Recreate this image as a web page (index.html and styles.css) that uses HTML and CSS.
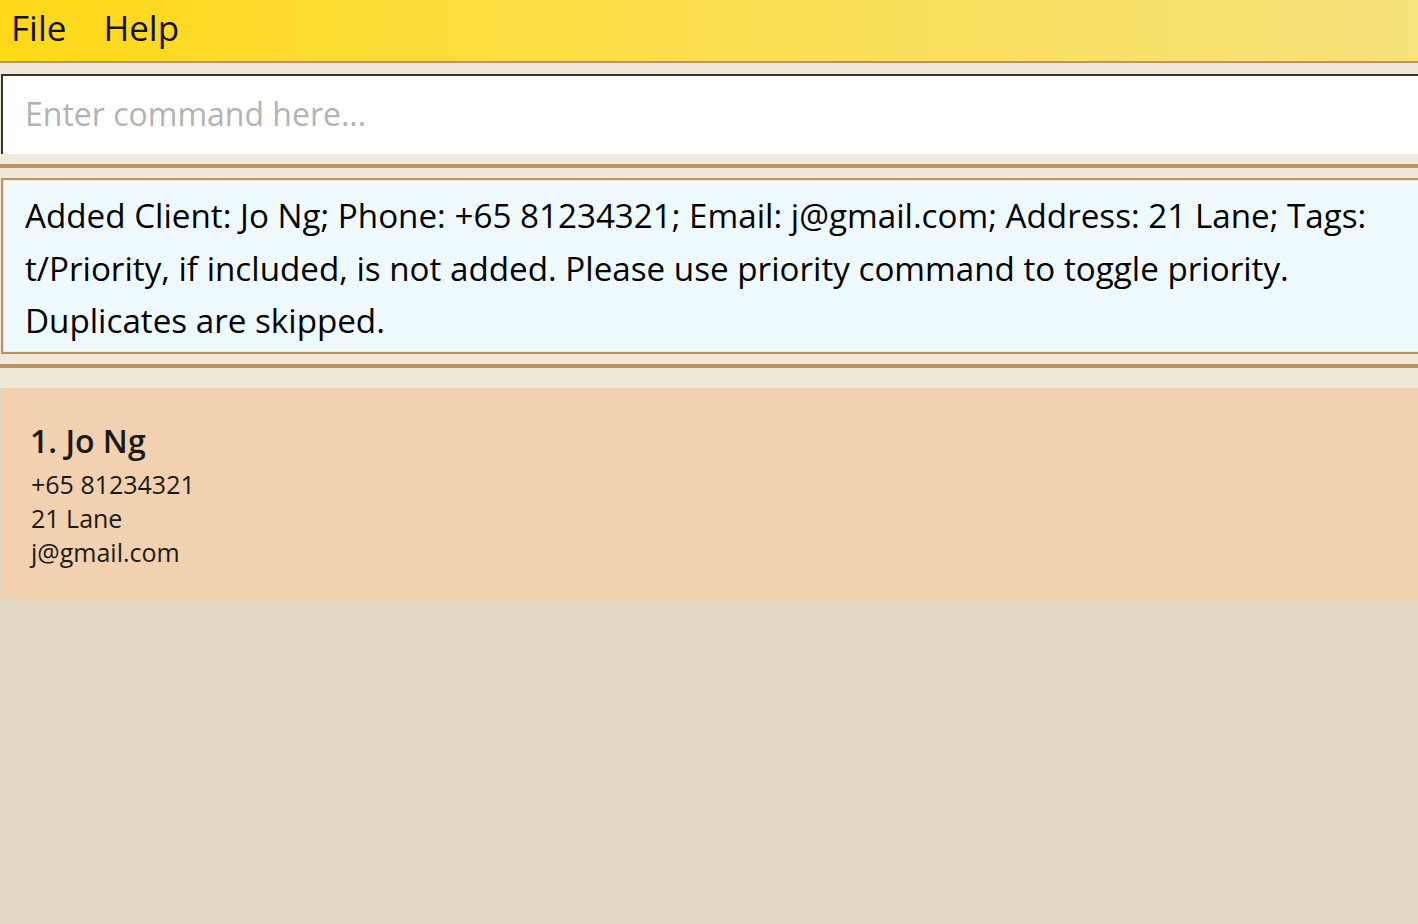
FILE: index.html
```html
<!DOCTYPE html>
<html lang="en">
<head>
<meta charset="utf-8">
<title>Address Book</title>
<link rel="stylesheet" href="styles.css">
</head>
<body>
<div class="app">
  <nav class="menubar">
    <span class="menu-item">File</span>
    <span class="menu-item">Help</span>
  </nav>
  <div class="command-wrap">
    <input class="command-box" type="text" placeholder="Enter command here...">
  </div>
  <div class="divider"></div>
  <div class="result-wrap">
    <div class="result-box">Added Client: Jo Ng; Phone: +65 81234321; Email: j@gmail.com; Address: 21 Lane; Tags: t/Priority, if included, is not added. Please use priority command to toggle priority. Duplicates are skipped.</div>
  </div>
  <div class="divider"></div>
  <div class="list">
    <div class="card">
      <div class="card-name">1. Jo Ng</div>
      <div class="card-line">+65 81234321</div>
      <div class="card-line">21 Lane</div>
      <div class="card-line">j@gmail.com</div>
    </div>
  </div>
</div>
</body>
</html>
```
FILE: styles.css
```css
html, body {
  margin: 0;
  padding: 0;
  height: 100%;
  overflow: hidden;
}
body {
  background: #f0e8d8;
  font-family: "Open Sans", "Liberation Sans", sans-serif;
  color: #000;
}
.app {
  display: flex;
  flex-direction: column;
  height: 100%;
}
.menubar {
  height: 61px;
  border-bottom: 2px solid #c09060;
  background: linear-gradient(to right, #ffd817 0%, #fadf4f 50%, #f7e27b 100%);
  display: flex;
  align-items: center;
  gap: 37px;
  padding-left: 11px;
  flex: none;
}
.menu-item {
  font-size: 35px;
  color: #111;
  line-height: 1;
  padding-bottom: 7px;
}
.command-wrap {
  margin-top: 11px;
  padding-left: 1px;
  flex: none;
}
.command-box {
  display: block;
  box-sizing: border-box;
  width: 1430px;
  height: 80px;
  margin: 0;
  border: none;
  border-top: 2px solid #333;
  border-left: 2px solid #333;
  background: #fff;
  padding: 0 0 4px 22px;
  font-family: "Open Sans", "Liberation Sans", sans-serif;
  font-size: 32px;
  color: #000;
  outline: none;
}
.command-box::placeholder {
  color: #b3b3b3;
}
.divider {
  flex: none;
  height: 4px;
  background: #c09060;
  margin-top: 10px;
}
.result-wrap {
  margin-top: 10px;
  padding-left: 1px;
  flex: none;
}
.result-box {
  box-sizing: border-box;
  width: 1430px;
  height: 176px;
  border: 2px solid #c09060;
  box-shadow: inset 0 0 0 1px #f3ead9;
  background: #effaff;
  padding: 10px 40px 0 22px;
  font-size: 33.2px;
  line-height: 52.5px;
  color: #000;
}
.list {
  flex: 1;
  margin-top: 20px;
  background: #e4d9c4;
  padding-left: 1px;
}
.card {
  background: #f2d1b0;
  height: 211px;
  box-sizing: border-box;
  padding: 32px 0 0 29px;
}
.card-name {
  font-weight: 600;
  font-size: 32px;
  line-height: 42px;
  color: #1a1a1a;
  margin-bottom: 5px;
}
.card-line {
  font-size: 25px;
  line-height: 34px;
  color: #1a1a1a;
  padding-left: 1px;
}
```
